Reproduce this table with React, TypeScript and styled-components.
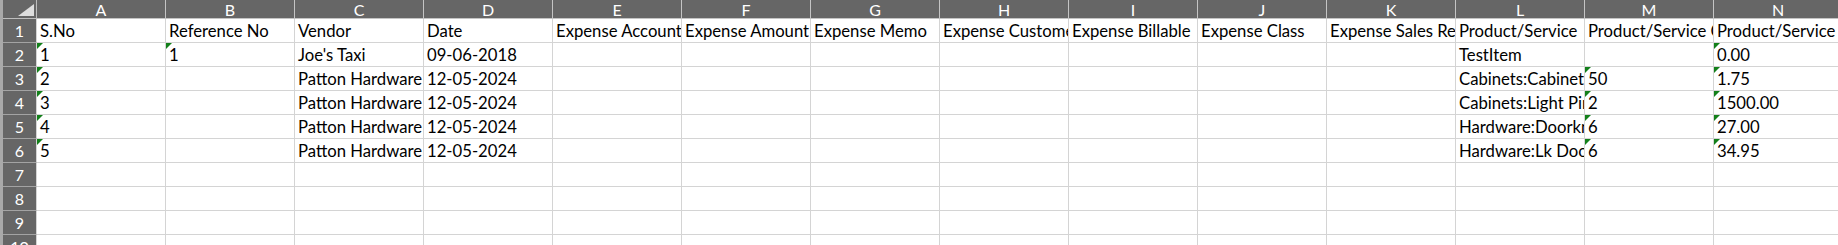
import { Fragment } from "react";
import styled, { createGlobalStyle } from "styled-components";

const GlobalStyle = createGlobalStyle`
  html, body {
    margin: 0;
    padding: 0;
    background: #ffffff;
    overflow: hidden;
  }
`;

const COLS = ["A", "B", "C", "D", "E", "F", "G", "H", "I", "J", "K", "L", "M", "N"];

const Sheet = styled.div`
  display: grid;
  grid-template-columns: 34px repeat(14, 129px);
  grid-template-rows: 19px repeat(10, 24px);
  border-left: 3px solid #a9a9a9;
  width: max-content;
  font-family: Lato, "Liberation Sans", sans-serif;
  font-size: 16.7px;
  color: #000;
`;

const Corner = styled.div`
  position: relative;
  background: #666666;
  border-right: 1px solid #bdbdbd;
  border-bottom: 1px solid #bdbdbd;
  box-sizing: border-box;
  &::after {
    content: "";
    position: absolute;
    right: 2px;
    bottom: 2px;
    width: 16px;
    height: 12px;
    background: #dedede;
    clip-path: polygon(100% 0, 100% 100%, 0 100%);
  }
`;

const ColHeader = styled.div`
  background: #666666;
  color: #ffffff;
  font-size: 16px;
  border-right: 1px solid #c4c4c4;
  border-bottom: 1px solid #c4c4c4;
  box-sizing: border-box;
  display: flex;
  justify-content: center;
  align-items: center;
  line-height: 18px;
  padding-top: 1px;
`;

const RowHeader = styled.div`
  background: #666666;
  color: #ffffff;
  font-size: 16px;
  border-right: 1px solid #d4d4d4;
  border-bottom: 1px solid #a3a3a3;
  box-sizing: border-box;
  display: flex;
  justify-content: center;
  align-items: flex-end;
  line-height: 20px;
  padding-bottom: 1px;
  overflow: hidden;
`;

const Cell = styled.div<{ $flag?: boolean }>`
  position: relative;
  border-right: 1px solid #d4d4d4;
  border-bottom: 1px solid #d4d4d4;
  box-sizing: border-box;
  display: flex;
  align-items: flex-end;
  padding: 0 0 1px 3px;
  line-height: 20px;
  white-space: nowrap;
  overflow: hidden;
  &::before {
    content: "";
    display: ${(p) => (p.$flag ? "block" : "none")};
    position: absolute;
    left: 0;
    top: 0;
    width: 6px;
    height: 6px;
    background: #13801a;
    clip-path: polygon(0 0, 100% 0, 0 100%);
  }
`;

type CellData = { v: string; flag?: boolean };

// t = number stored as text (green flag), p = plain value
const t = (v: string): CellData => ({ v, flag: true });
const p = (v: string): CellData => ({ v });
const e: CellData = { v: "" };

const header: CellData[] = [
  "S.No",
  "Reference No",
  "Vendor",
  "Date",
  "Expense Account",
  "Expense Amount",
  "Expense Memo",
  "Expense Customer",
  "Expense Billable",
  "Expense Class",
  "Expense Sales Rep",
  "Product/Service",
  "Product/Service Quantity",
  "Product/Service Rate",
].map(p);

const rows: CellData[][] = [
  header,
  [t("1"), t("1"), p("Joe's Taxi"), p("09-06-2018"), e, e, e, e, e, e, e, p("TestItem"), e, t("0.00")],
  [t("2"), e, p("Patton Hardware"), p("12-05-2024"), e, e, e, e, e, e, e, p("Cabinets:Cabinet Pulls"), t("50"), t("1.75")],
  [t("3"), e, p("Patton Hardware"), p("12-05-2024"), e, e, e, e, e, e, e, p("Cabinets:Light Pine"), t("2"), t("1500.00")],
  [t("4"), e, p("Patton Hardware"), p("12-05-2024"), e, e, e, e, e, e, e, p("Hardware:Doorknobs Std"), t("6"), t("27.00")],
  [t("5"), e, p("Patton Hardware"), p("12-05-2024"), e, e, e, e, e, e, e, p("Hardware:Lk Doorknobs"), t("6"), t("34.95")],
];

while (rows.length < 10) rows.push(COLS.map(() => e));

export default function App() {
  return (
    <>
      <GlobalStyle />
      <Sheet>
        <Corner />
        {COLS.map((c) => (
          <ColHeader key={c}>{c}</ColHeader>
        ))}
        {rows.map((row, i) => (
          <Fragment key={i}>
            <RowHeader>{i + 1}</RowHeader>
            {row.map((cell, j) => (
              <Cell key={j} $flag={cell.flag}>
                {cell.v}
              </Cell>
            ))}
          </Fragment>
        ))}
      </Sheet>
    </>
  );
}
